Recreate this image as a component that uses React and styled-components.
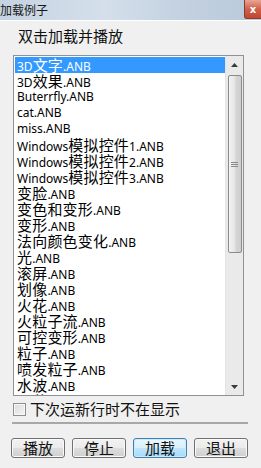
import React from "react";
import styled, { createGlobalStyle } from "styled-components";

const Global = createGlobalStyle`
  html, body { margin: 0; padding: 0; background: #f0f0f0; }
  body { font-family: "Noto Sans", "Noto Sans CJK SC", sans-serif; }
`;

const Win = styled.div`
  width: 261px;
  height: 468px;
  background: #f0f0f0;
  display: flex;
  flex-direction: column;
  overflow: hidden;
`;

const TitleBar = styled.div`
  height: 20px;
  display: flex;
  align-items: center;
  justify-content: space-between;
  background: linear-gradient(90deg, #c6d3e2 0%, #d4dfeb 40%, #c3d1e0 70%, #b9c9da 100%);
  border-bottom: 1px solid #ffffff;
`;

const Title = styled.span`
  font-family: "Noto Sans CJK SC", sans-serif;
  font-size: 12px;
  line-height: 20px;
  color: #1a1a1a;
`;

const CloseBtn = styled.div`
  width: 17px;
  height: 19px;
  align-self: flex-start;
  box-sizing: border-box;
  background: linear-gradient(180deg, #e8a596 0%, #d0614b 50%, #c1462f 100%);
  border: 1px solid #8a3b2e;
  border-right: none;
  border-top: none;
  border-bottom-left-radius: 3px;
  display: flex;
  align-items: center;
  justify-content: center;
  color: #fff;
  font-family: "DejaVu Sans", sans-serif;
  font-weight: bold;
  font-size: 10px;
`;

const Body = styled.div`
  display: flex;
  flex-direction: column;
  padding: 0 0 0 13px;
`;

const Heading = styled.div`
  font-family: "Noto Sans CJK SC", sans-serif;
  font-size: 15px;
  line-height: 20px;
  color: #111;
  height: 34px;
  padding: 5px 0 0 5px;
  box-sizing: border-box;
`;

const ListBox = styled.div`
  width: 231px;
  height: 341px;
  box-sizing: border-box;
  border: 1px solid #8e9197;
  background: #ffffff;
  display: flex;
`;

const Items = styled.div`
  flex: 1;
  padding: 1px 0 0 1px;
  overflow: hidden;
  display: flex;
  flex-direction: column;
`;

const Item = styled.div`
  height: 16px;
  flex: none;
  line-height: 16px;
  padding-left: 2px;
  white-space: nowrap;
  font-family: "Noto Sans", sans-serif;
  font-size: 12px;
  color: ${(p) => (p.$sel ? "#ffffff" : "#000000")};
  background: ${(p) => (p.$sel ? "#3399ff" : "transparent")};
`;

const Cjk = styled.span`
  font-family: "Noto Sans CJK SC", sans-serif;
  font-size: 15px;
  line-height: 16px;
  letter-spacing: 0.2px;
`;

const ScrollBar = styled.div`
  width: 17px;
  flex: none;
  background: #eaeaea;
  border-left: 1px solid #e3e3e3;
  display: flex;
  flex-direction: column;
  align-items: center;
`;

const Arrow = styled.div`
  width: 17px;
  height: 17px;
  flex: none;
  display: flex;
  align-items: center;
  justify-content: center;
`;

const Thumb = styled.div`
  width: 14px;
  height: 178px;
  margin-top: 2px;
  box-sizing: border-box;
  border: 1px solid #8b8b8b;
  border-radius: 2px;
  background: linear-gradient(90deg, #f3f3f3 0%, #e6e6e6 45%, #d4d4d4 60%, #cfcfcf 100%);
  display: flex;
  align-items: center;
  justify-content: center;
`;

const Spacer = styled.div`
  flex: 1;
`;

const CheckRow = styled.div`
  display: flex;
  align-items: center;
  height: 20px;
  margin-top: 3px;
`;

const CheckBox = styled.div`
  width: 11px;
  height: 11px;
  border: 1px solid #8f8f8f;
  background: linear-gradient(135deg, #dcdcdc 0%, #f4f4f4 100%);
  box-shadow: inset 0 0 0 1px #f8f8f8;
  margin-right: 4px;
`;

const CheckLabel = styled.span`
  font-family: "Noto Sans CJK SC", sans-serif;
  font-size: 15px;
  line-height: 20px;
  color: #111;
`;

const Separator = styled.div`
  width: 236px;
  height: 2px;
  margin: 3px 0 0 -1px;
  background: #a8a8a8;
`;

const Buttons = styled.div`
  display: flex;
  gap: 7px;
  margin: 14px 0 0 -2px;
`;

const Btn = styled.div`
  width: 54px;
  height: 20px;
  box-sizing: border-box;
  border: 1px solid ${(p) => (p.$focus ? "#3c7fb1" : "#707070")};
  border-radius: 3px;
  background: ${(p) =>
    p.$focus
      ? "linear-gradient(180deg, #eaf6fd 0%, #d9f0fc 50%, #bee6fd 51%, #a7d9f5 100%)"
      : "linear-gradient(180deg, #f2f2f2 0%, #ebebeb 50%, #dddddd 51%, #cfcfcf 100%)"};
  box-shadow: inset 0 0 0 1px ${(p) => (p.$focus ? "#c8ecfb" : "#fafafa")};
  display: flex;
  align-items: center;
  justify-content: center;
  font-family: "Noto Sans CJK SC", sans-serif;
  font-size: 15px;
  line-height: 18px;
  color: #111;
`;

const files = [
  "3D文字.ANB",
  "3D效果.ANB",
  "Buterrfly.ANB",
  "cat.ANB",
  "miss.ANB",
  "Windows模拟控件1.ANB",
  "Windows模拟控件2.ANB",
  "Windows模拟控件3.ANB",
  "变脸.ANB",
  "变色和变形.ANB",
  "变形.ANB",
  "法向颜色变化.ANB",
  "光.ANB",
  "滚屏.ANB",
  "划像.ANB",
  "火花.ANB",
  "火粒子流.ANB",
  "可控变形.ANB",
  "粒子.ANB",
  "喷发粒子.ANB",
  "水波.ANB",
  "雪花飘飘.ANB",
];

function renderLabel(text) {
  const parts = text.split(/([\u4e00-\u9fff]+)/).filter(Boolean);
  return parts.map((p, i) =>
    /[\u4e00-\u9fff]/.test(p) ? <Cjk key={i}>{p}</Cjk> : <React.Fragment key={i}>{p}</React.Fragment>
  );
}

export default function App() {
  return (
    <Win>
      <Global />
      <TitleBar>
        <Title>加载例子</Title>
        <CloseBtn>x</CloseBtn>
      </TitleBar>
      <Body>
        <Heading>双击加载并播放</Heading>
        <ListBox>
          <Items>
            {files.map((f, i) => (
              <Item key={f} $sel={i === 0}>
                {renderLabel(f)}
              </Item>
            ))}
          </Items>
          <ScrollBar>
            <Arrow>
              <svg width="7" height="4" viewBox="0 0 7 4">
                <path d="M3.5 0 L7 4 L0 4 Z" fill="#3a3a3a" />
              </svg>
            </Arrow>
            <Thumb>
              <svg width="7" height="7" viewBox="0 0 7 7">
                <path d="M0 1.5 H7 M0 3.5 H7 M0 5.5 H7" stroke="#8a8a8a" strokeWidth="1" />
              </svg>
            </Thumb>
            <Spacer />
            <Arrow>
              <svg width="7" height="4" viewBox="0 0 7 4">
                <path d="M0 0 L7 0 L3.5 4 Z" fill="#3a3a3a" />
              </svg>
            </Arrow>
          </ScrollBar>
        </ListBox>
        <CheckRow>
          <CheckBox />
          <CheckLabel>下次运新行时不在显示</CheckLabel>
        </CheckRow>
        <Separator />
        <Buttons>
          <Btn>播放</Btn>
          <Btn>停止</Btn>
          <Btn $focus>加载</Btn>
          <Btn>退出</Btn>
        </Buttons>
      </Body>
    </Win>
  );
}
